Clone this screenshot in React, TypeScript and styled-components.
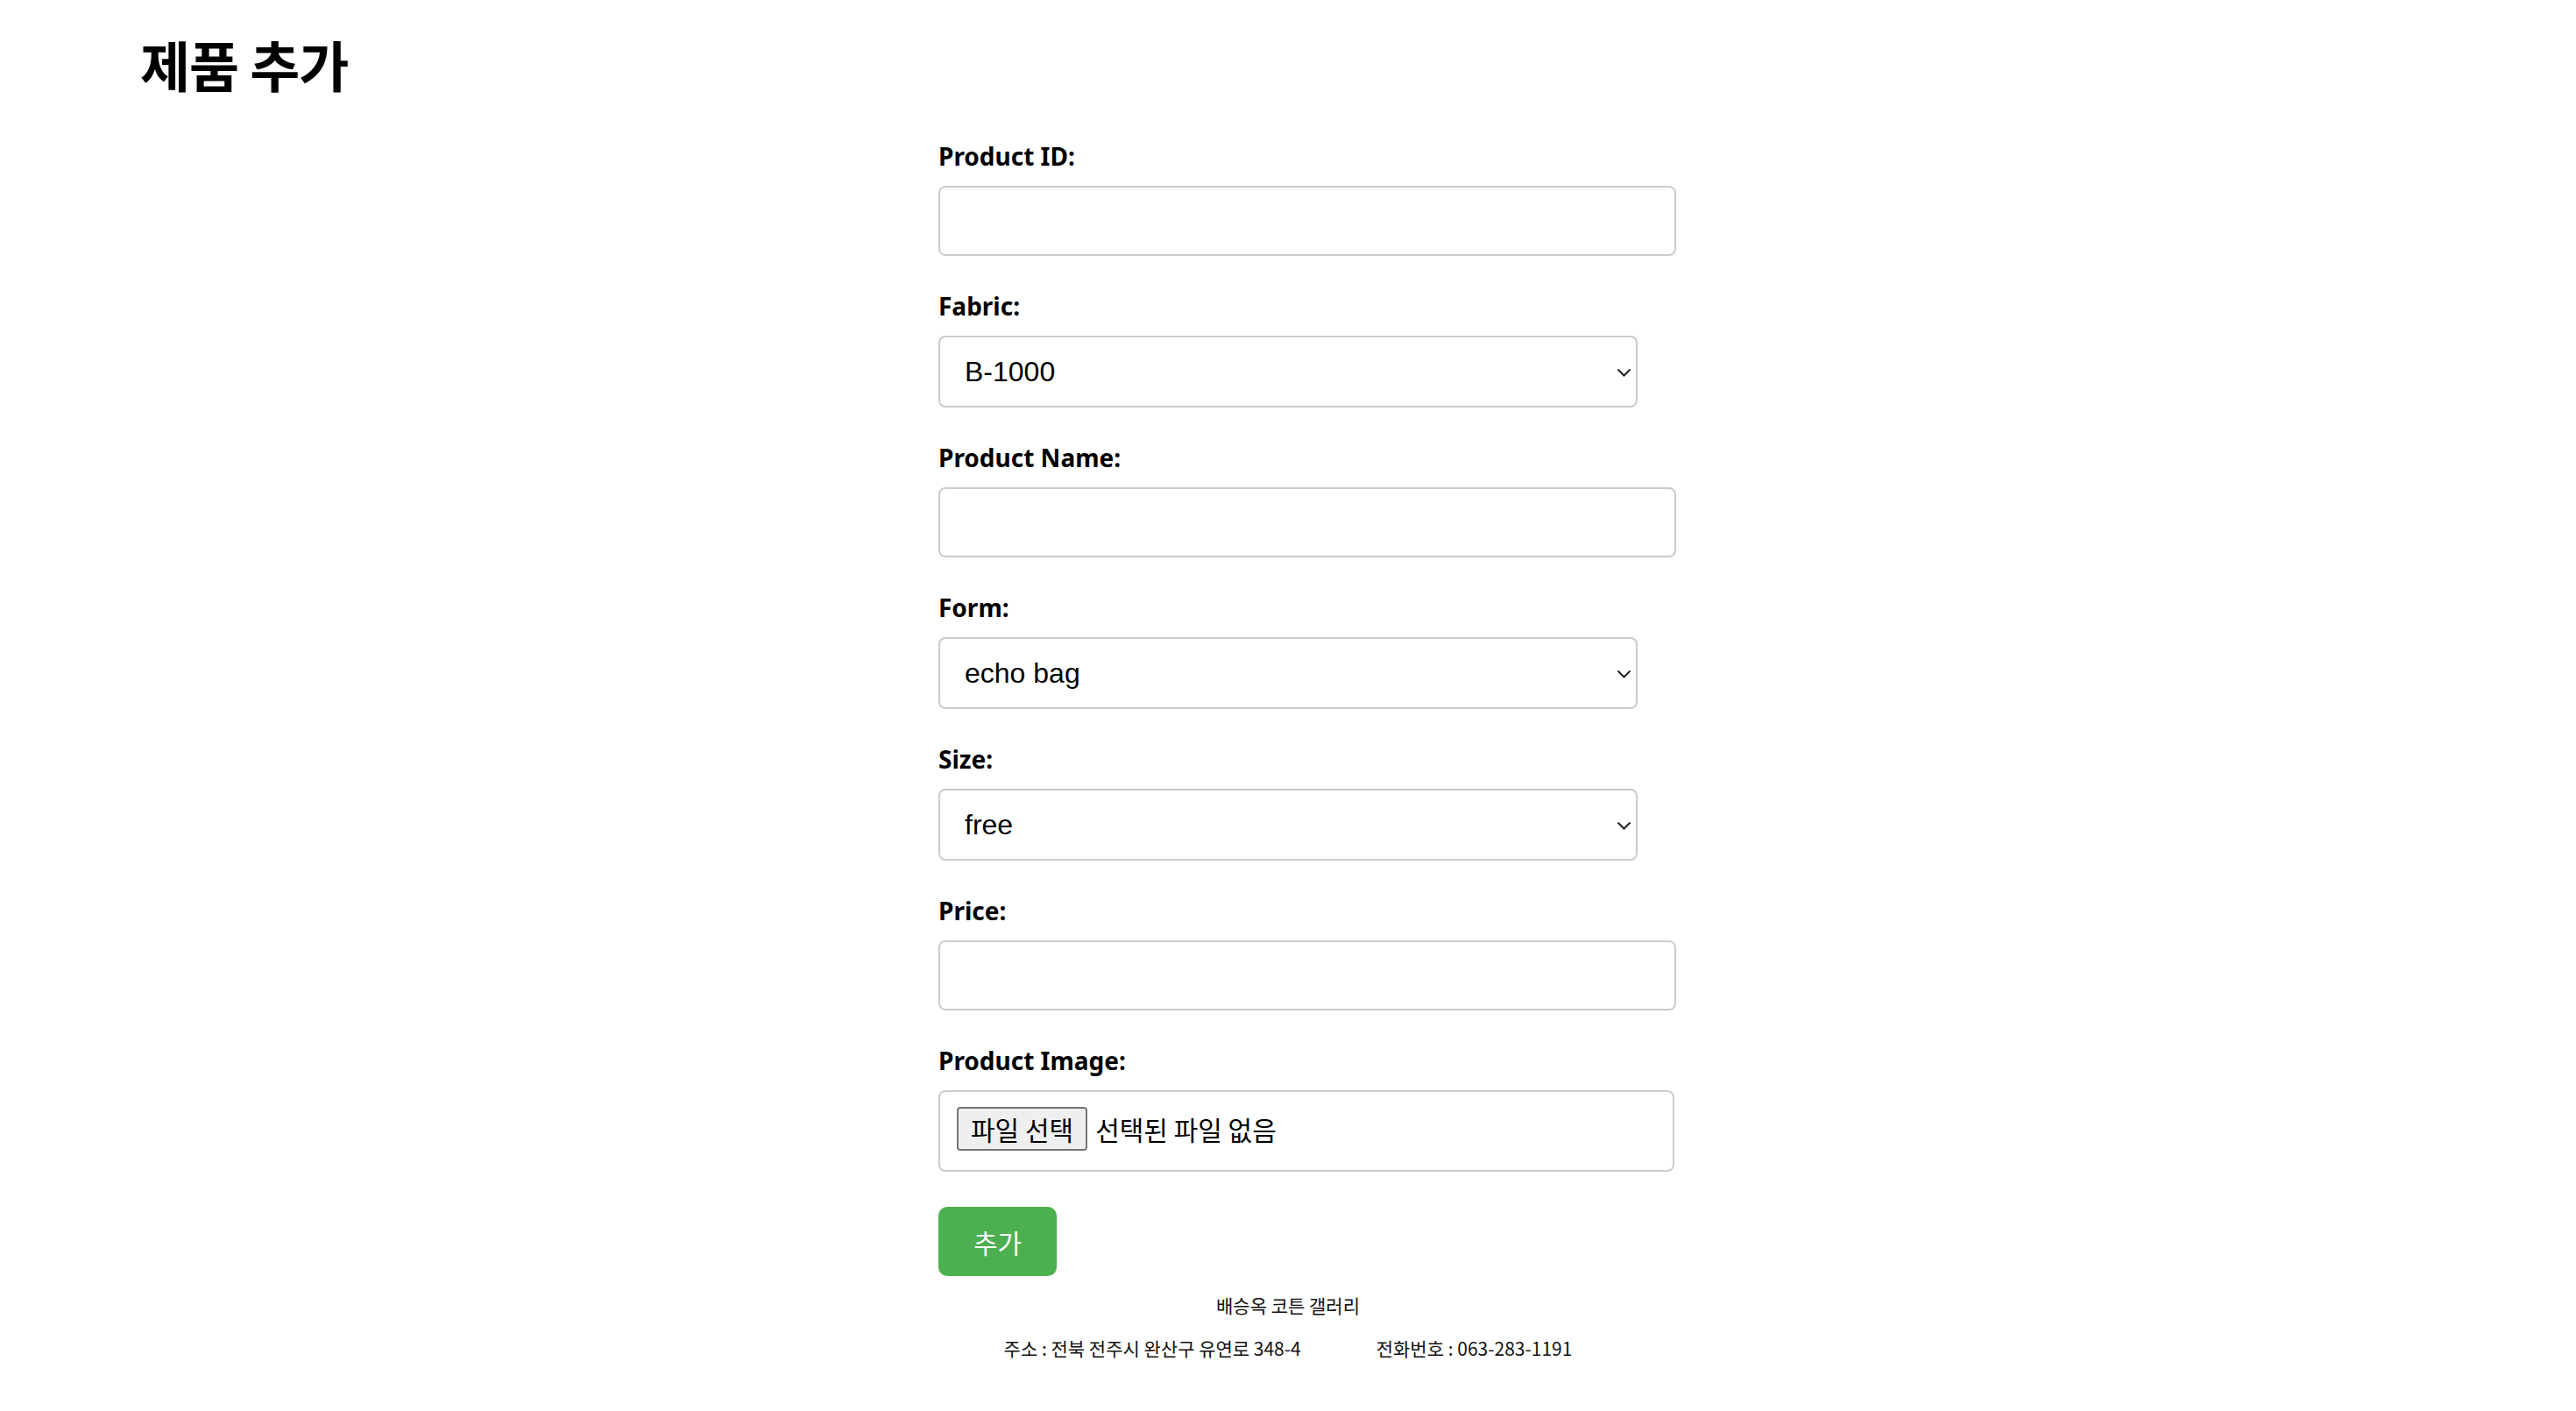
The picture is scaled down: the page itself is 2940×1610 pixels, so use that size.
import React, { useState } from 'react'
import styled, { createGlobalStyle } from 'styled-components'

const GlobalStyle = createGlobalStyle`
	html, body {
		margin: 0;
		padding: 0;
		background: #fff;
		color: #000;
		font-family: 'Noto Sans', 'Noto Sans CJK KR', sans-serif;
	}
`

const Page = styled.div`
	min-height: 1610px;
	background: #fff;
`

const Header = styled.header`
	padding: 33px 0 0 160px;
`

const Title = styled.h1`
	margin: 0;
	font-family: 'Noto Sans CJK KR', sans-serif;
	font-size: 62px;
	line-height: 80px;
	font-weight: 700;
	letter-spacing: -1px;
`

const FormContainer = styled.form`
	width: 798px;
	margin: 46px auto 0;
`

const Label = styled.label`
	display: block;
	font-family: 'Noto Sans', sans-serif;
	font-size: 28px;
	line-height: 38px;
	font-weight: 700;
	margin-bottom: 15px;
`

const TextInput = styled.input`
	display: block;
	box-sizing: content-box;
	width: 100%;
	height: 40px;
	padding: 18px 20px;
	margin: 0 0 38px;
	border: 2px solid #cccccc;
	border-radius: 8px;
	font-size: 32px;
	font-family: 'Liberation Sans', sans-serif;
	outline: none;
`

const SelectWrap = styled.div`
	position: relative;
	width: 100%;
	margin-bottom: 38px;
`

const Select = styled.select`
	display: block;
	appearance: none;
	box-sizing: border-box;
	width: 100%;
	height: 82px;
	padding: 0 60px 0 28px;
	border: 2px solid #cccccc;
	border-radius: 8px;
	background: #fff;
	color: #000;
	font-family: 'Liberation Sans', Arial, sans-serif;
	font-size: 32px;
	outline: none;
`

const Chevron = styled.svg`
	position: absolute;
	right: 7px;
	top: 50%;
	width: 17px;
	height: 10px;
	margin-top: -4px;
	pointer-events: none;
`

const FileBox = styled.div`
	display: flex;
	align-items: flex-start;
	box-sizing: content-box;
	width: 100%;
	height: 55px;
	padding: 17px 19px;
	margin-bottom: 40px;
	border: 2px solid #cccccc;
	border-radius: 8px;
	font-family: 'Noto Sans CJK KR', sans-serif;
	font-size: 30px;
`

const FileButton = styled.label`
	display: flex;
	align-items: center;
	box-sizing: border-box;
	height: 50px;
	padding: 0 14px;
	background: #efefef;
	border: 2px solid #767676;
	border-radius: 4px;
	cursor: pointer;
	white-space: nowrap;
`

const FileName = styled.span`
	margin-left: 9px;
	line-height: 50px;
	white-space: nowrap;
`

const HiddenFile = styled.input`
	display: none;
`

const SubmitButton = styled.button`
	display: block;
	height: 79px;
	padding: 0 40px;
	border: none;
	border-radius: 10px;
	background: #4caf50;
	color: #fff;
	font-family: 'Noto Sans CJK KR', sans-serif;
	font-size: 30px;
	cursor: pointer;
`

const Footer = styled.footer`
	margin-top: 18px;
	font-family: 'Noto Sans CJK KR', sans-serif;
	font-size: 21px;
	line-height: 30px;
	text-align: center;
	color: #111;
`

const FooterLine = styled.p<{ $gap?: number; $top?: number }>`
	margin: 0;
	display: flex;
	justify-content: center;
	gap: ${p => p.$gap ?? 0}px;
	margin-top: ${p => p.$top ?? 0}px;
`

const ChevronIcon = () => (
	<Chevron viewBox='0 0 17 10' fill='none'>
		<path d='M1.5 1.5L8.5 8.5L15.5 1.5' stroke='#222' strokeWidth='2' />
	</Chevron>
)

const fabrics = ['B-1000', 'B-2000', 'C-1000']
const forms = ['echo bag', 'pouch', 'tote bag']
const sizes = ['free', 'S', 'M', 'L']

const AddProductPage = () => {
	const [fileName, setFileName] = useState('')

	return (
		<Page>
			<GlobalStyle />
			<Header>
				<Title>제품 추가</Title>
			</Header>
			<FormContainer onSubmit={event => event.preventDefault()}>
				<Label htmlFor='productId'>Product ID:</Label>
				<TextInput id='productId' type='text' />

				<Label htmlFor='fabric'>Fabric:</Label>
				<SelectWrap>
					<Select id='fabric' defaultValue='B-1000'>
						{fabrics.map(f => (
							<option key={f}>{f}</option>
						))}
					</Select>
					<ChevronIcon />
				</SelectWrap>

				<Label htmlFor='productName'>Product Name:</Label>
				<TextInput id='productName' type='text' />

				<Label htmlFor='form'>Form:</Label>
				<SelectWrap>
					<Select id='form' defaultValue='echo bag'>
						{forms.map(f => (
							<option key={f}>{f}</option>
						))}
					</Select>
					<ChevronIcon />
				</SelectWrap>

				<Label htmlFor='size'>Size:</Label>
				<SelectWrap>
					<Select id='size' defaultValue='free'>
						{sizes.map(s => (
							<option key={s}>{s}</option>
						))}
					</Select>
					<ChevronIcon />
				</SelectWrap>

				<Label htmlFor='price'>Price:</Label>
				<TextInput id='price' type='text' />

				<Label htmlFor='productImage'>Product Image:</Label>
				<FileBox>
					<FileButton htmlFor='productImage'>파일 선택</FileButton>
					<FileName>{fileName || '선택된 파일 없음'}</FileName>
					<HiddenFile
						id='productImage'
						type='file'
						onChange={e => setFileName(e.target.files?.[0]?.name ?? '')}
					/>
				</FileBox>

				<SubmitButton type='submit'>추가</SubmitButton>
			</FormContainer>
			<Footer>
				<FooterLine>배승옥 코튼 갤러리</FooterLine>
				<FooterLine $top={19} $gap={86}>
					<span>주소 : 전북 전주시 완산구 유연로 348-4</span>
					<span>전화번호 : 063-283-1191</span>
				</FooterLine>
			</Footer>
		</Page>
	)
}

export default AddProductPage
